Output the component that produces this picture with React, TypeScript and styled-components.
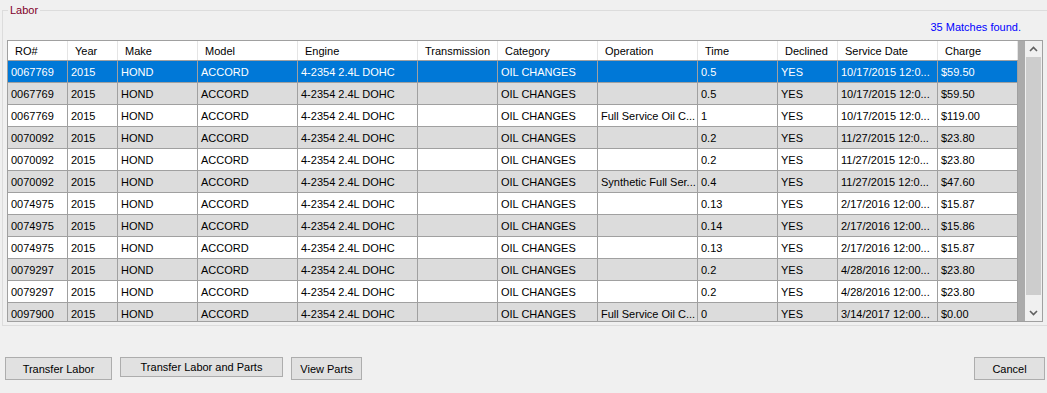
import React from "react";
import styled, { createGlobalStyle } from "styled-components";

const GlobalStyle = createGlobalStyle`
  html, body {
    margin: 0;
    padding: 0;
    width: 1047px;
    height: 393px;
    overflow: hidden;
    background: #f0f0f0;
    font-family: "Liberation Sans", Arial, sans-serif;
    font-size: 11px;
    color: #000;
  }
  * { box-sizing: border-box; }
`;

const Page = styled.div`
  width: 1047px;
  height: 393px;
  display: flex;
  flex-direction: column;
`;

const GroupBox = styled.fieldset`
  margin: 4px -10px 0 2px;
  padding: 0 0 3px 4px;
  border: 1px solid #dcdcdc;
  min-width: 0;
`;

const GroupLegend = styled.legend`
  margin-left: 1px;
  padding: 0 2px;
  font-size: 11px;
  line-height: 12px;
  color: #80002a;
`;

const MatchesRow = styled.div`
  width: 1036px;
  height: 24px;
  display: flex;
  justify-content: flex-end;
  align-items: flex-end;
  padding: 0 22px 6px 0;
  line-height: 13px;
  color: #0000ff;
`;

const Grid = styled.div`
  width: 1036px;
  height: 282px;
  border: 1px solid #a0a0a0;
  display: flex;
`;

const DataArea = styled.div`
  width: 1018px;
  height: 280px;
  background: #ababab;
  overflow: hidden;
`;

const HeaderRow = styled.div`
  display: flex;
  width: 1010px;
  height: 20px;
  background: #fff;
  border-bottom: 1px solid #a0a0a0;
`;

const HeaderCell = styled.div<{ $w: number }>`
  width: ${(p) => p.$w}px;
  flex: none;
  height: 19px;
  padding-left: 7px;
  display: flex;
  align-items: center;
  border-right: 1px solid #e5e5e5;
  white-space: nowrap;
  overflow: hidden;
`;

const Row = styled.div<{ $bg: string; $fg: string }>`
  display: flex;
  width: 1010px;
  height: 22px;
  background: ${(p) => p.$bg};
  color: ${(p) => p.$fg};
`;

const Cell = styled.div<{ $w: number }>`
  width: ${(p) => p.$w}px;
  flex: none;
  height: 22px;
  padding: 0 0 0 3px;
  display: flex;
  align-items: center;
  border-right: 1px solid #a0a0a0;
  border-bottom: 1px solid #a0a0a0;
  white-space: nowrap;
  overflow: hidden;
`;

const ScrollBar = styled.div`
  width: 17px;
  height: 280px;
  background: #f0f0f0;
  display: flex;
  flex-direction: column;
`;

const ScrollButton = styled.div<{ $h: number }>`
  height: ${(p) => p.$h}px;
  flex: none;
  display: flex;
  align-items: center;
  justify-content: center;
`;

const Track = styled.div`
  flex: 1;
  padding: 0 1px;
`;

const Thumb = styled.div`
  height: 238px;
  background: #cdcdcd;
`;

const Footer = styled.div`
  display: flex;
  align-items: flex-start;
  gap: 8px;
  padding: 31px 2px 0 5px;
`;

const Button = styled.button<{ $w: number; $h?: number; $push?: boolean }>`
  width: ${(p) => p.$w}px;
  height: ${(p) => p.$h ?? 23}px;
  margin-left: ${(p) => (p.$push ? "auto" : "0")};
  background: #e1e1e1;
  border: 1px solid #adadad;
  font-family: "Liberation Sans", Arial, sans-serif;
  font-size: 11px;
  color: #000;
  padding: 0;
`;

const widths = [60, 50, 80, 100, 120, 80, 100, 100, 80, 60, 100, 80];
const headers = [
  "RO#",
  "Year",
  "Make",
  "Model",
  "Engine",
  "Transmission",
  "Category",
  "Operation",
  "Time",
  "Declined",
  "Service Date",
  "Charge",
];

type R = [string, string, string, string, string];
const raw: R[] = [
  ["0067769", "", "0.5", "10/17/2015 12:0...", "$59.50"],
  ["0067769", "", "0.5", "10/17/2015 12:0...", "$59.50"],
  ["0067769", "Full Service Oil C...", "1", "10/17/2015 12:0...", "$119.00"],
  ["0070092", "", "0.2", "11/27/2015 12:0...", "$23.80"],
  ["0070092", "", "0.2", "11/27/2015 12:0...", "$23.80"],
  ["0070092", "Synthetic Full Ser...", "0.4", "11/27/2015 12:0...", "$47.60"],
  ["0074975", "", "0.13", "2/17/2016 12:00...", "$15.87"],
  ["0074975", "", "0.14", "2/17/2016 12:00...", "$15.86"],
  ["0074975", "", "0.13", "2/17/2016 12:00...", "$15.87"],
  ["0079297", "", "0.2", "4/28/2016 12:00...", "$23.80"],
  ["0079297", "", "0.2", "4/28/2016 12:00...", "$23.80"],
  ["0097900", "Full Service Oil C...", "0", "3/14/2017 12:00...", "$0.00"],
];

const rows = raw.map(([ro, op, time, date, charge]) => [
  ro,
  "2015",
  "HOND",
  "ACCORD",
  "4-2354 2.4L DOHC",
  "",
  "OIL CHANGES",
  op,
  time,
  "YES",
  date,
  charge,
]);

const Chevron = ({ up }: { up: boolean }) => (
  <svg width="9" height="6" viewBox="0 0 9 6">
    <path
      d={up ? "M1 5 L4.5 1.5 L8 5" : "M1 1 L4.5 4.5 L8 1"}
      fill="none"
      stroke="#606060"
      strokeWidth="1.6"
    />
  </svg>
);

export default function App() {
  return (
    <Page>
      <GlobalStyle />
      <GroupBox>
        <GroupLegend>Labor</GroupLegend>
        <MatchesRow>35 Matches found.</MatchesRow>
        <Grid>
          <DataArea>
            <HeaderRow>
              {headers.map((h, i) => (
                <HeaderCell key={h} $w={widths[i]}>
                  {h}
                </HeaderCell>
              ))}
            </HeaderRow>
            {rows.map((r, ri) => {
              const selected = ri === 0;
              const bg = selected ? "#0078d7" : ri % 2 === 1 ? "#dcdcdc" : "#ffffff";
              return (
                <Row key={ri} $bg={bg} $fg={selected ? "#ffffff" : "#000000"}>
                  {r.map((c, ci) => (
                    <Cell key={ci} $w={widths[ci]}>
                      {c}
                    </Cell>
                  ))}
                </Row>
              );
            })}
          </DataArea>
          <ScrollBar>
            <ScrollButton $h={16}>
              <Chevron up />
            </ScrollButton>
            <Track>
              <Thumb />
            </Track>
            <ScrollButton $h={17}>
              <Chevron up={false} />
            </ScrollButton>
          </ScrollBar>
        </Grid>
      </GroupBox>
      <Footer>
        <Button $w={107}>Transfer Labor</Button>
        <Button $w={163} $h={20}>
          Transfer Labor and Parts
        </Button>
        <Button $w={71}>View Parts</Button>
        <Button $w={71} $push>
          Cancel
        </Button>
      </Footer>
    </Page>
  );
}
